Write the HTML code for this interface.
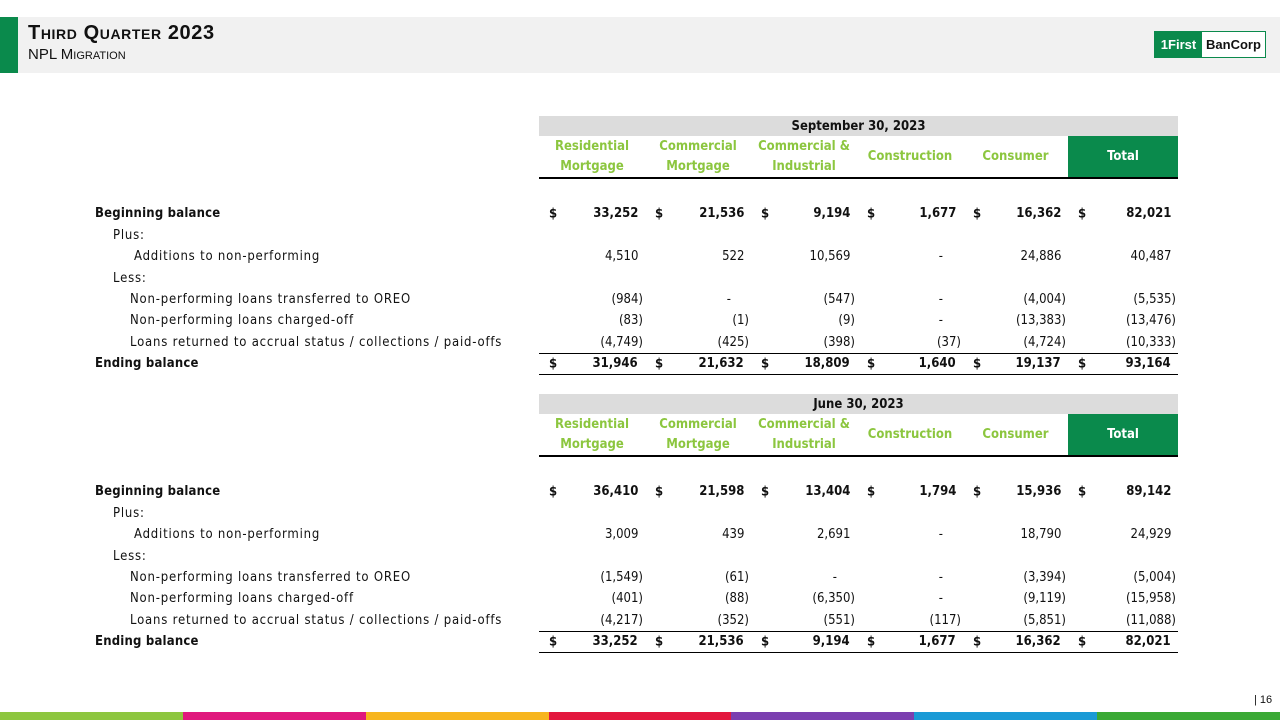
<!DOCTYPE html>
<html><head><meta charset="utf-8"><style>
*{margin:0;padding:0;box-sizing:border-box}
body{width:1280px;height:720px;position:relative;background:#fff;font-family:"DejaVu Sans Condensed","Liberation Sans",sans-serif;color:#111;overflow:hidden}
.band{position:absolute;left:0;top:17px;width:1280px;height:56px;background:#f1f1f1}
.gbar{position:absolute;left:0;top:17px;width:18px;height:56px;background:#0a8a4c}
.t1{position:absolute;left:28px;top:22px;font-size:20px;font-weight:bold;font-variant:small-caps;font-family:"Liberation Sans",sans-serif;letter-spacing:.6px}
.t2{position:absolute;left:28px;top:46px;font-size:15px;font-variant:small-caps;font-family:"Liberation Sans",sans-serif}
.logo{position:absolute;left:1154px;top:31px;width:112px;height:27px;border:1px solid #0a8a4c;background:#fff;font-family:"Liberation Sans",sans-serif;font-weight:bold;font-size:13px}
.logo .a{position:absolute;left:0;top:0;width:47px;height:25px;background:#0a8a4c;color:#fff;line-height:25px;text-align:center}
.logo .b{position:absolute;left:47px;top:0;width:63px;height:25px;line-height:25px;text-align:center;color:#111}
.blk{position:absolute;left:95px;width:1085px}
table{border-collapse:collapse;table-layout:fixed;font-size:13px}
td{white-space:nowrap;padding:0;height:21.45px;vertical-align:middle}
td.l{letter-spacing:.8px}
td.lb{letter-spacing:.2px}
.gh td{height:20px;background:#dcdcdc;font-weight:bold;text-align:center}
.gh td.e{background:#fff}
.hh td{height:42px;color:#8cc63f;font-weight:bold;text-align:center;line-height:20px;border-bottom:2px solid #000;vertical-align:bottom;padding-bottom:0}
.hh td.one{vertical-align:middle}
.hh td.tot{background:#0a8a4c;color:#fff}
.hh td.e{border-bottom:none;color:#000}
.sp td{height:25px}
.n{position:relative}
.n .d{position:absolute;left:10px;top:50%;transform:translateY(-50%)}
td.n{text-align:right;padding-right:2px}
.h{visibility:hidden}
b{font-weight:bold}
.end td.n{border-top:1px solid #000;border-bottom:1px solid #000;font-weight:bold}
.ind1{padding-left:18px}.ind2{padding-left:39px}.ind3{padding-left:35px}
.pg{position:absolute;left:1254px;top:694px;font-size:11px;font-family:"Liberation Sans",sans-serif}
.stripes{position:absolute;left:0;top:712px;width:1280px;height:8px;display:flex}
.stripes div{flex:1}
</style></head><body>
<div class="band"></div><div class="gbar"></div>
<div class="t1">Third Quarter 2023</div>
<div class="t2">NPL Migration</div>
<div class="logo"><div class="a">1First</div><div class="b">BanCorp</div></div>

<div class="blk" style="top:116px">
<table>
<colgroup><col style="width:444px"><col style="width:106px"><col style="width:106px"><col style="width:106px"><col style="width:106px"><col style="width:105px"><col style="width:110px"></colgroup>
<tr class="gh"><td class="e"></td><td colspan="6">September 30, 2023</td></tr>
<tr class="hh"><td class="e"></td><td>Residential<br>Mortgage</td><td>Commercial<br>Mortgage</td><td>Commercial &amp;<br>Industrial</td><td class="one">Construction</td><td class="one">Consumer</td><td class="tot one">Total</td></tr>
<tr class="sp"><td colspan="7"></td></tr>
<tr><td class="lb"><b>Beginning balance</b></td><td class="n"><b class="d">$</b><b>33,252</b><span class="h">)</span></td><td class="n"><b class="d">$</b><b>21,536</b><span class="h">)</span></td><td class="n"><b class="d">$</b><b>9,194</b><span class="h">)</span></td><td class="n"><b class="d">$</b><b>1,677</b><span class="h">)</span></td><td class="n"><b class="d">$</b><b>16,362</b><span class="h">)</span></td><td class="n"><b class="d">$</b><b>82,021</b><span class="h">)</span></td></tr>
<tr><td class="l ind1">Plus:</td><td colspan="6"></td></tr>
<tr><td class="l ind2">Additions to non-performing</td><td class="n">4,510<span class="h">)</span></td><td class="n">522<span class="h">)</span></td><td class="n">10,569<span class="h">)</span></td><td class="n" style="padding-right:20px">-</td><td class="n">24,886<span class="h">)</span></td><td class="n">40,487<span class="h">)</span></td></tr>
<tr><td class="l ind1">Less:</td><td colspan="6"></td></tr>
<tr><td class="l ind3">Non-performing loans transferred to OREO</td><td class="n">(984)</td><td class="n" style="padding-right:20px">-</td><td class="n">(547)</td><td class="n" style="padding-right:20px">-</td><td class="n">(4,004)</td><td class="n">(5,535)</td></tr>
<tr><td class="l ind3">Non-performing loans charged-off</td><td class="n">(83)</td><td class="n">(1)</td><td class="n">(9)</td><td class="n" style="padding-right:20px">-</td><td class="n">(13,383)</td><td class="n">(13,476)</td></tr>
<tr><td class="l ind3">Loans returned to accrual status / collections / paid-offs</td><td class="n">(4,749)</td><td class="n">(425)</td><td class="n">(398)</td><td class="n">(37)</td><td class="n">(4,724)</td><td class="n">(10,333)</td></tr>
<tr class="end"><td class="lb"><b>Ending balance</b></td><td class="n"><b class="d">$</b>31,946<span class="h">)</span></td><td class="n"><b class="d">$</b>21,632<span class="h">)</span></td><td class="n"><b class="d">$</b>18,809<span class="h">)</span></td><td class="n"><b class="d">$</b>1,640<span class="h">)</span></td><td class="n"><b class="d">$</b>19,137<span class="h">)</span></td><td class="n"><b class="d">$</b>93,164<span class="h">)</span></td></tr>
</table>
</div>

<div class="blk" style="top:394px">
<table>
<colgroup><col style="width:444px"><col style="width:106px"><col style="width:106px"><col style="width:106px"><col style="width:106px"><col style="width:105px"><col style="width:110px"></colgroup>
<tr class="gh"><td class="e"></td><td colspan="6">June 30, 2023</td></tr>
<tr class="hh"><td class="e"></td><td>Residential<br>Mortgage</td><td>Commercial<br>Mortgage</td><td>Commercial &amp;<br>Industrial</td><td class="one">Construction</td><td class="one">Consumer</td><td class="tot one">Total</td></tr>
<tr class="sp"><td colspan="7"></td></tr>
<tr><td class="lb"><b>Beginning balance</b></td><td class="n"><b class="d">$</b><b>36,410</b><span class="h">)</span></td><td class="n"><b class="d">$</b><b>21,598</b><span class="h">)</span></td><td class="n"><b class="d">$</b><b>13,404</b><span class="h">)</span></td><td class="n"><b class="d">$</b><b>1,794</b><span class="h">)</span></td><td class="n"><b class="d">$</b><b>15,936</b><span class="h">)</span></td><td class="n"><b class="d">$</b><b>89,142</b><span class="h">)</span></td></tr>
<tr><td class="l ind1">Plus:</td><td colspan="6"></td></tr>
<tr><td class="l ind2">Additions to non-performing</td><td class="n">3,009<span class="h">)</span></td><td class="n">439<span class="h">)</span></td><td class="n">2,691<span class="h">)</span></td><td class="n" style="padding-right:20px">-</td><td class="n">18,790<span class="h">)</span></td><td class="n">24,929<span class="h">)</span></td></tr>
<tr><td class="l ind1">Less:</td><td colspan="6"></td></tr>
<tr><td class="l ind3">Non-performing loans transferred to OREO</td><td class="n">(1,549)</td><td class="n">(61)</td><td class="n" style="padding-right:20px">-</td><td class="n" style="padding-right:20px">-</td><td class="n">(3,394)</td><td class="n">(5,004)</td></tr>
<tr><td class="l ind3">Non-performing loans charged-off</td><td class="n">(401)</td><td class="n">(88)</td><td class="n">(6,350)</td><td class="n" style="padding-right:20px">-</td><td class="n">(9,119)</td><td class="n">(15,958)</td></tr>
<tr><td class="l ind3">Loans returned to accrual status / collections / paid-offs</td><td class="n">(4,217)</td><td class="n">(352)</td><td class="n">(551)</td><td class="n">(117)</td><td class="n">(5,851)</td><td class="n">(11,088)</td></tr>
<tr class="end"><td class="lb"><b>Ending balance</b></td><td class="n"><b class="d">$</b>33,252<span class="h">)</span></td><td class="n"><b class="d">$</b>21,536<span class="h">)</span></td><td class="n"><b class="d">$</b>9,194<span class="h">)</span></td><td class="n"><b class="d">$</b>1,677<span class="h">)</span></td><td class="n"><b class="d">$</b>16,362<span class="h">)</span></td><td class="n"><b class="d">$</b>82,021<span class="h">)</span></td></tr>
</table>
</div>

<div class="pg">| 16</div>
<div class="stripes"><div style="background:#8dc63f"></div><div style="background:#e0197d"></div><div style="background:#f7b51e"></div><div style="background:#e3173e"></div><div style="background:#7b3fb0"></div><div style="background:#1a9ad6"></div><div style="background:#3aa935"></div></div>
</body></html>
